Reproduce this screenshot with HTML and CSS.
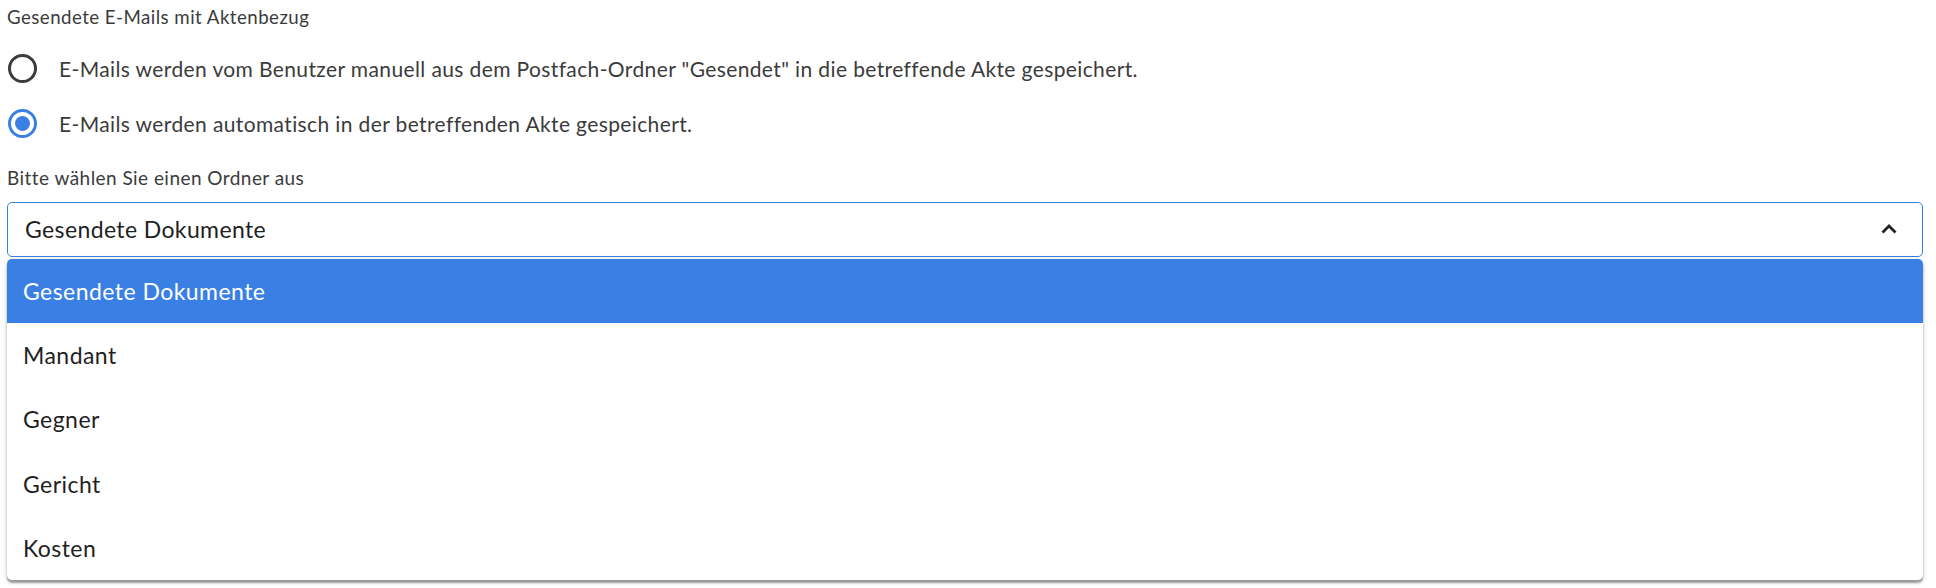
FILE: index.html
```html
<!DOCTYPE html>
<html lang="de">
<head>
<meta charset="utf-8">
<title>Gesendete E-Mails</title>
<link rel="stylesheet" href="styles.css">
</head>
<body>
<div class="page">
  <div class="title">Gesendete E-Mails mit Aktenbezug</div>
  <div class="radios">
    <label class="radio-row">
      <span class="radio"></span>
      <span class="radio-label">E-Mails werden vom Benutzer manuell aus dem Postfach-Ordner "Gesendet" in die betreffende Akte gespeichert.</span>
    </label>
    <label class="radio-row">
      <span class="radio checked"><span class="dot"></span></span>
      <span class="radio-label">E-Mails werden automatisch in der betreffenden Akte gespeichert.</span>
    </label>
  </div>
  <div class="field-label">Bitte wählen Sie einen Ordner aus</div>
  <div class="select-wrap">
    <div class="select">
      <span class="select-value">Gesendete Dokumente</span>
      <svg class="chevron" width="16" height="10" viewBox="0 0 16 10"><path d="M1.5 8.5 L8 2 L14.5 8.5" fill="none" stroke="#222" stroke-width="2.8"/></svg>
    </div>
    <ul class="menu">
      <li class="item active">Gesendete Dokumente</li>
      <li class="item">Mandant</li>
      <li class="item">Gegner</li>
      <li class="item">Gericht</li>
      <li class="item">Kosten</li>
    </ul>
  </div>
</div>
</body>
</html>
```
FILE: styles.css
```css
html, body {
  margin: 0;
  padding: 0;
  background: #fff;
}
body {
  font-family: Lato, "Noto Sans", sans-serif;
  width: 1936px;
  height: 588px;
  overflow: hidden;
}
.page {
  padding: 7px 13px 0 7px;
}
.title {
  font-size: 18.7px;
  line-height: 21.6px;
  letter-spacing: 0.45px;
  color: #3b3b3b;
}
.radios {
  margin-top: 12px;
  display: flex;
  flex-direction: column;
}
.radio-row {
  height: 55.5px;
  display: flex;
  align-items: center;
}
.radio {
  box-sizing: border-box;
  width: 29px;
  height: 29px;
  margin-left: 1px;
  border: 3.5px solid #3c3c3c;
  border-radius: 50%;
  display: flex;
  align-items: center;
  justify-content: center;
}
.radio.checked {
  border-color: #3a80e4;
}
.dot {
  width: 15px;
  height: 15px;
  border-radius: 50%;
  background: #3a80e4;
}
.radio-label {
  margin-left: 22px;
  font-size: 21px;
  line-height: 1.2;
  letter-spacing: 0.38px;
  color: #3b3b3b;
}
.field-label {
  margin-top: 15.5px;
  font-size: 19px;
  line-height: 1.2;
  letter-spacing: 0.45px;
  color: #3b3b3b;
}
.select-wrap {
  position: relative;
  margin-top: 12px;
}
.select {
  box-sizing: border-box;
  height: 55px;
  border: 1.6px solid #3a7fe2;
  border-radius: 5px;
  display: flex;
  align-items: center;
  justify-content: space-between;
  padding: 0 25px 0 17px;
}
.select-value {
  font-size: 23px;
  line-height: 1.2;
  letter-spacing: 0.38px;
  color: #1f1f1f;
}
.chevron {
  display: block;
}
.menu {
  position: absolute;
  left: 0;
  right: 0;
  top: 57px;
  margin: 0;
  padding: 0;
  list-style: none;
  background: #fff;
  border-radius: 5px;
  overflow: hidden;
  box-shadow: 0 3px 2px rgba(0,0,0,0.35), 0 1px 6px rgba(0,0,0,0.15);
}
.item {
  height: 64.2px;
  display: flex;
  align-items: center;
  padding-left: 16px;
  font-size: 23px;
  letter-spacing: 0.45px;
  color: #1f1f1f;
}
.item.active {
  background: #3a80e4;
  color: #fff;
}
```
